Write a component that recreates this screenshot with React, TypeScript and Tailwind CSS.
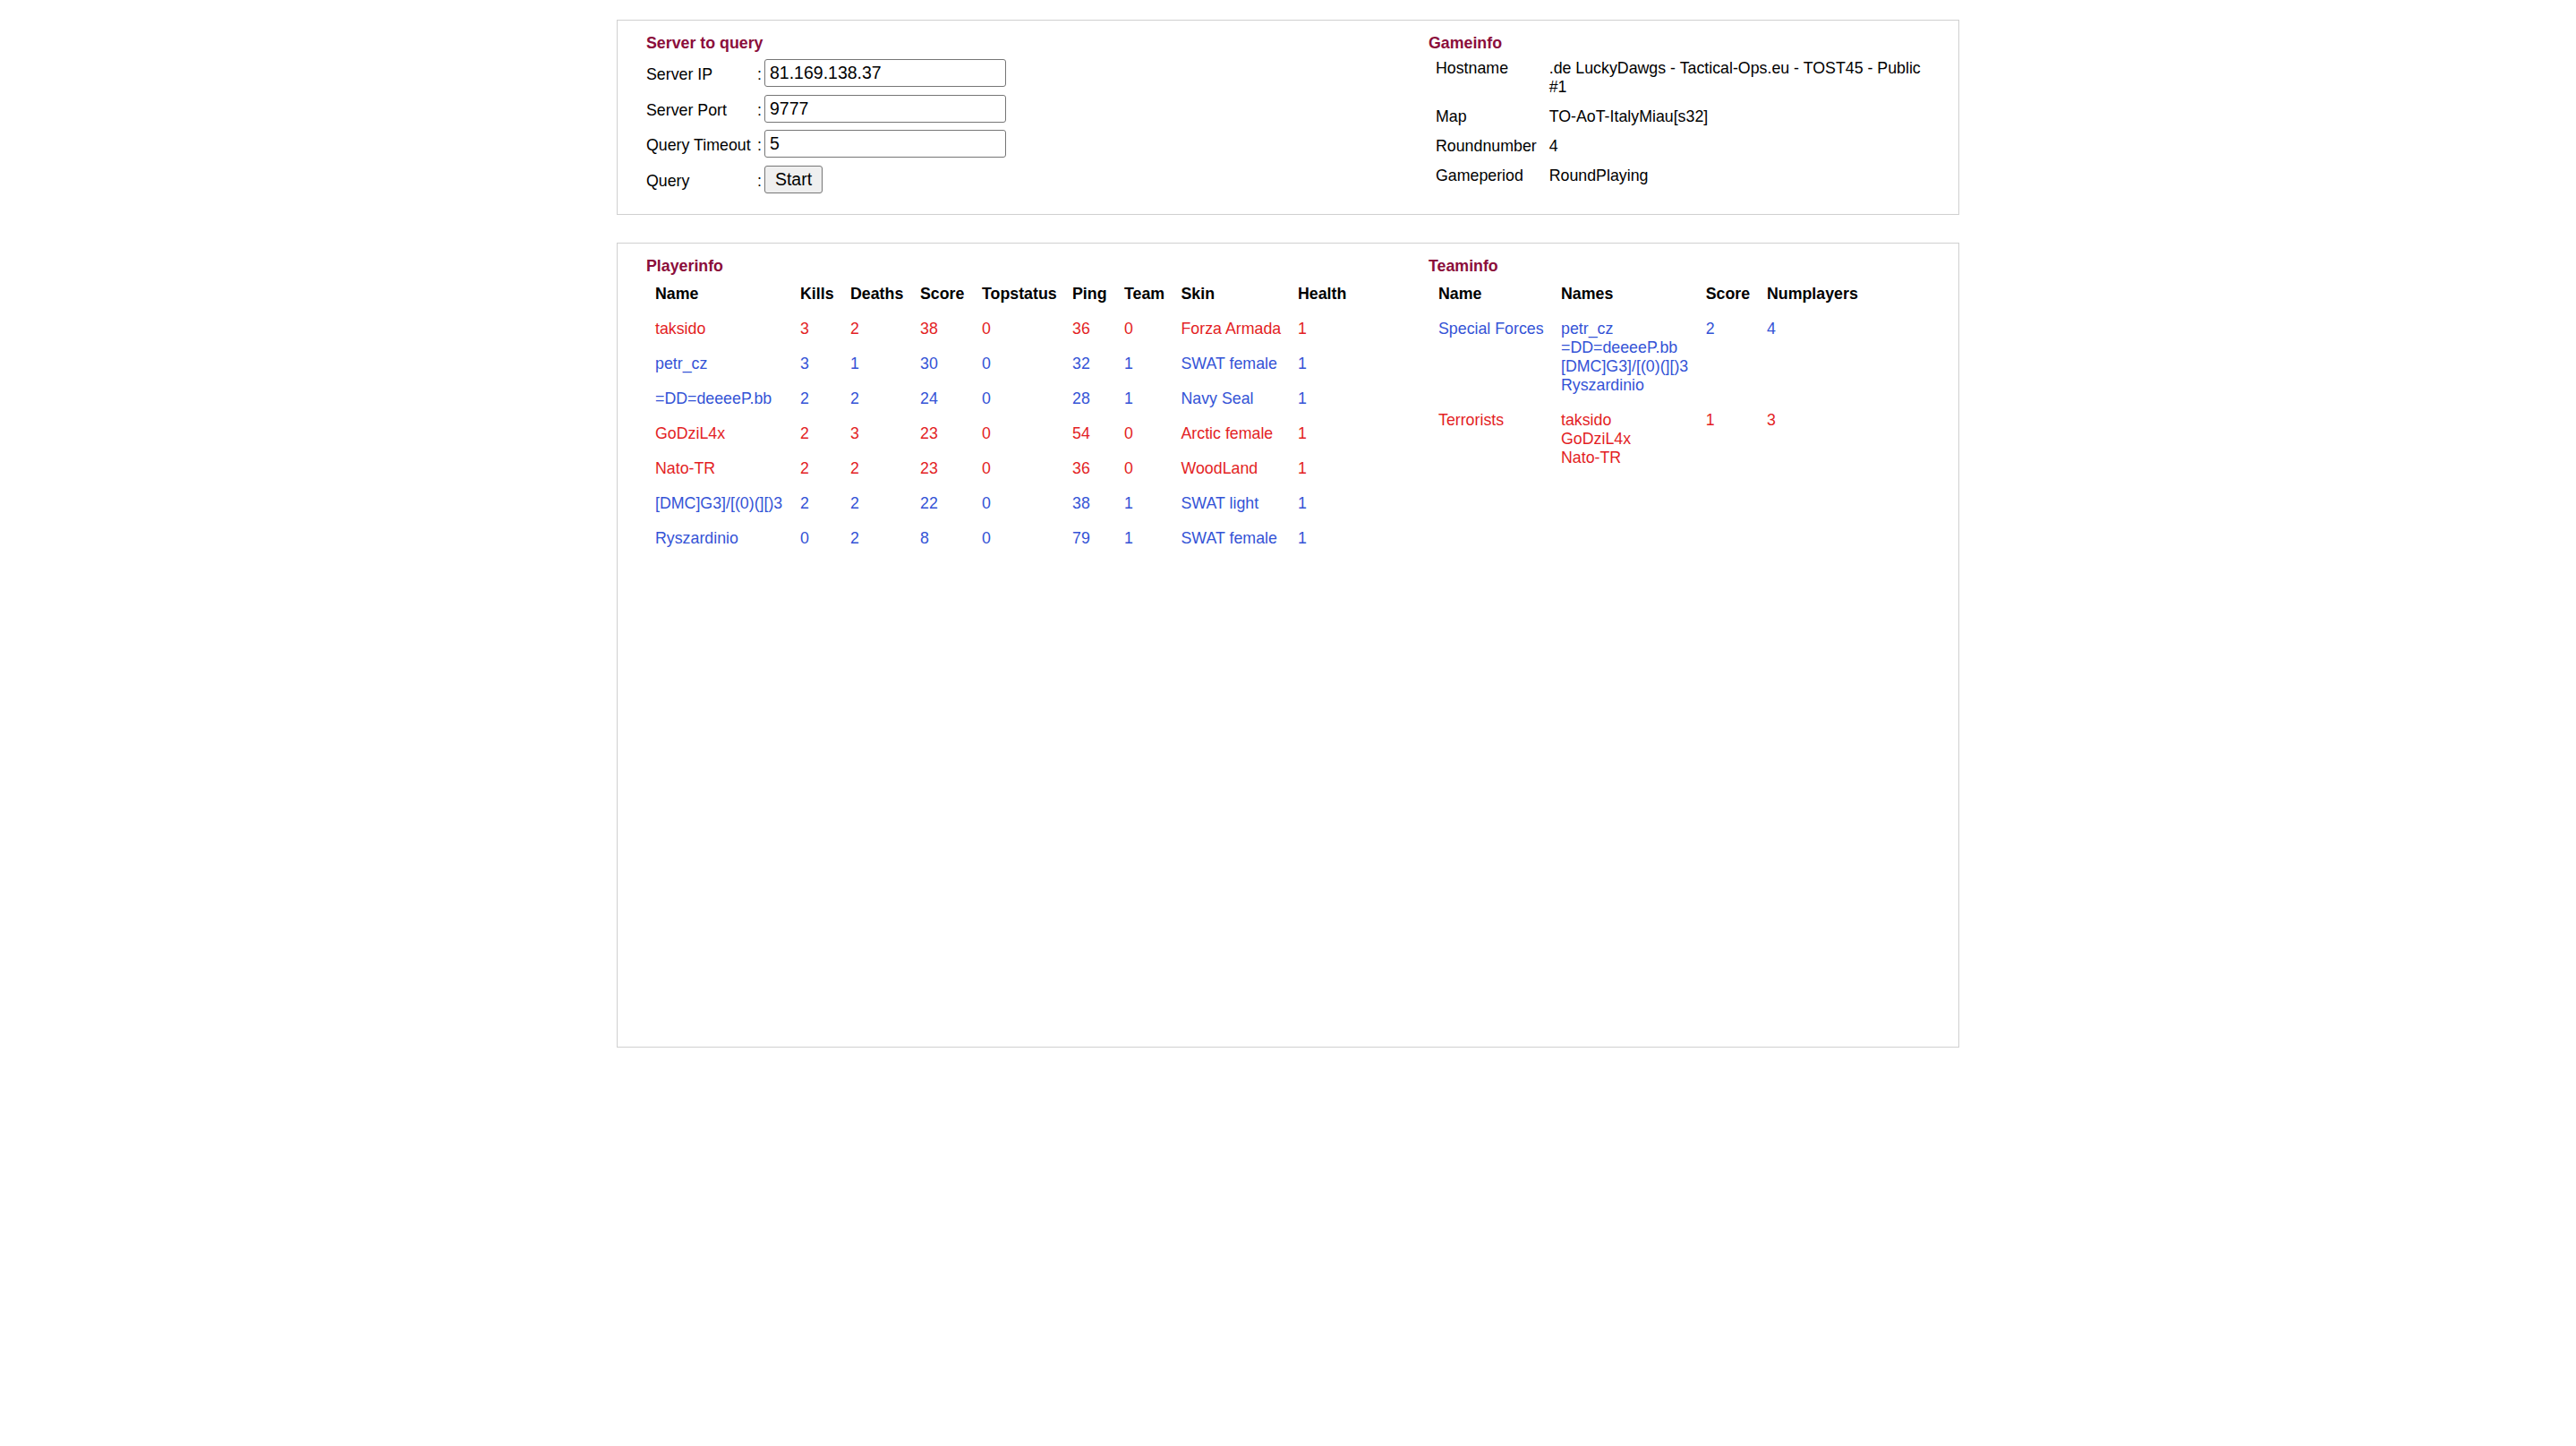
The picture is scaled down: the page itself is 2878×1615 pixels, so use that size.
import React from 'react';

const RED = 'text-[#e31e24]';
const BLUE = 'text-[#3453d6]';
const HEAD = 'font-bold text-[#8b0d3b]';

type P = {
  name: string;
  kills: number;
  deaths: number;
  score: number;
  top: number;
  ping: number;
  team: number;
  skin: string;
  health: number;
};

const players: P[] = [
  { name: 'taksido', kills: 3, deaths: 2, score: 38, top: 0, ping: 36, team: 0, skin: 'Forza Armada', health: 1 },
  { name: 'petr_cz', kills: 3, deaths: 1, score: 30, top: 0, ping: 32, team: 1, skin: 'SWAT female', health: 1 },
  { name: '=DD=deeeeP.bb', kills: 2, deaths: 2, score: 24, top: 0, ping: 28, team: 1, skin: 'Navy Seal', health: 1 },
  { name: 'GoDziL4x', kills: 2, deaths: 3, score: 23, top: 0, ping: 54, team: 0, skin: 'Arctic female', health: 1 },
  { name: 'Nato-TR', kills: 2, deaths: 2, score: 23, top: 0, ping: 36, team: 0, skin: 'WoodLand', health: 1 },
  { name: '[DMC]G3]/[(0)(][)3', kills: 2, deaths: 2, score: 22, top: 0, ping: 38, team: 1, skin: 'SWAT light', health: 1 },
  { name: 'Ryszardinio', kills: 0, deaths: 2, score: 8, top: 0, ping: 79, team: 1, skin: 'SWAT female', health: 1 },
];

const teams = [
  { name: 'Special Forces', names: ['petr_cz', '=DD=deeeeP.bb', '[DMC]G3]/[(0)(][)3', 'Ryszardinio'], score: 2, num: 4, color: BLUE },
  { name: 'Terrorists', names: ['taksido', 'GoDziL4x', 'Nato-TR'], score: 1, num: 3, color: RED },
];

const gameinfo: [string, string][] = [
  ['Hostname', '.de LuckyDawgs - Tactical-Ops.eu - TOST45 - Public #1'],
  ['Map', 'TO-AoT-ItalyMiau[s32]'],
  ['Roundnumber', '4'],
  ['Gameperiod', 'RoundPlaying'],
];

const formRows: [string, string][] = [
  ['Server IP', '81.169.138.37'],
  ['Server Port', '9777'],
  ['Query Timeout', '5'],
];

const cell = 'pl-[10px] py-[9px] whitespace-nowrap';

export default function App() {
  return (
    <div className="min-h-screen bg-white pt-[22px] text-[17.8px] leading-[21px] text-black font-['Liberation_Sans',Arial,sans-serif]">
      {/* Box 1 */}
      <div className="mx-auto w-[1500px] h-[218px] border border-[#d0d0d0] pt-[14.5px] pl-[32px] pr-[30px] grid grid-cols-[874px_1fr] items-start">
        <div>
          <div className={HEAD}>Server to query</div>
          <div className="mt-[3.25px] grid grid-cols-[124px_8px_auto] auto-rows-[39.7px] items-center justify-start">
            {formRows.map(([label, value]) => (
              <React.Fragment key={label}>
                <div className="pt-[3.7px] whitespace-nowrap">{label}</div>
                <div className="pt-[3.7px]">:</div>
                <input
                  readOnly
                  value={value}
                  className="w-[270px] h-[31px] border border-[#767676] rounded-[3px] bg-white px-[5px] text-[19.5px] text-black outline-none font-['Liberation_Sans',Arial,sans-serif]"
                />
              </React.Fragment>
            ))}
            <div className="pt-[3.7px]">Query</div>
            <div className="pt-[3.7px]">:</div>
            <button className="justify-self-start w-[65px] h-[31px] border border-[#767676] rounded-[3px] bg-[#efefef] text-[19.5px] text-black leading-none font-['Liberation_Sans',Arial,sans-serif]">
              Start
            </button>
          </div>
        </div>
        <div>
          <div className={HEAD}>Gameinfo</div>
          <div className="mt-[1.5px] ml-[2px] grid grid-cols-[auto_1fr] gap-x-[2px]">
            {gameinfo.map(([k, v]) => (
              <React.Fragment key={k}>
                <div className="p-[6px] whitespace-nowrap">{k}</div>
                <div className="p-[6px]">{v}</div>
              </React.Fragment>
            ))}
          </div>
        </div>
      </div>

      {/* Box 2 */}
      <div className="mt-[31px] mx-auto w-[1500px] h-[899px] border border-[#d0d0d0] pt-[14.5px] pl-[32px] pr-[30px] grid grid-cols-[874px_1fr] items-start content-start">
        <div>
          <div className={HEAD}>Playerinfo</div>
          <div className="mt-[1.5px] grid grid-cols-[162px_56px_78px_69px_101px_58px_63.5px_130.5px_auto]">
            {['Name', 'Kills', 'Deaths', 'Score', 'Topstatus', 'Ping', 'Team', 'Skin', 'Health'].map((h) => (
              <div key={h} className={`${cell} font-bold`}>
                {h}
              </div>
            ))}
            {players.map((p) => {
              const c = p.team === 0 ? RED : BLUE;
              const vals = [p.name, p.kills, p.deaths, p.score, p.top, p.ping, p.team, p.skin, p.health];
              return (
                <React.Fragment key={p.name}>
                  {vals.map((v, i) => (
                    <div key={i} className={`${cell} ${c}`}>
                      {v}
                    </div>
                  ))}
                </React.Fragment>
              );
            })}
          </div>
        </div>
        <div>
          <div className={HEAD}>Teaminfo</div>
          <div className="mt-[1.5px] ml-[1px] grid grid-cols-[137px_161.7px_68.3px_auto]">
            {['Name', 'Names', 'Score', 'Numplayers'].map((h) => (
              <div key={h} className={`${cell} font-bold`}>
                {h}
              </div>
            ))}
            {teams.map((t) => (
              <React.Fragment key={t.name}>
                <div className={`${cell} ${t.color}`}>{t.name}</div>
                <div className={`${cell} ${t.color}`}>
                  {t.names.map((n) => (
                    <div key={n}>{n}</div>
                  ))}
                </div>
                <div className={`${cell} ${t.color}`}>{t.score}</div>
                <div className={`${cell} ${t.color}`}>{t.num}</div>
              </React.Fragment>
            ))}
          </div>
        </div>
      </div>
    </div>
  );
}
